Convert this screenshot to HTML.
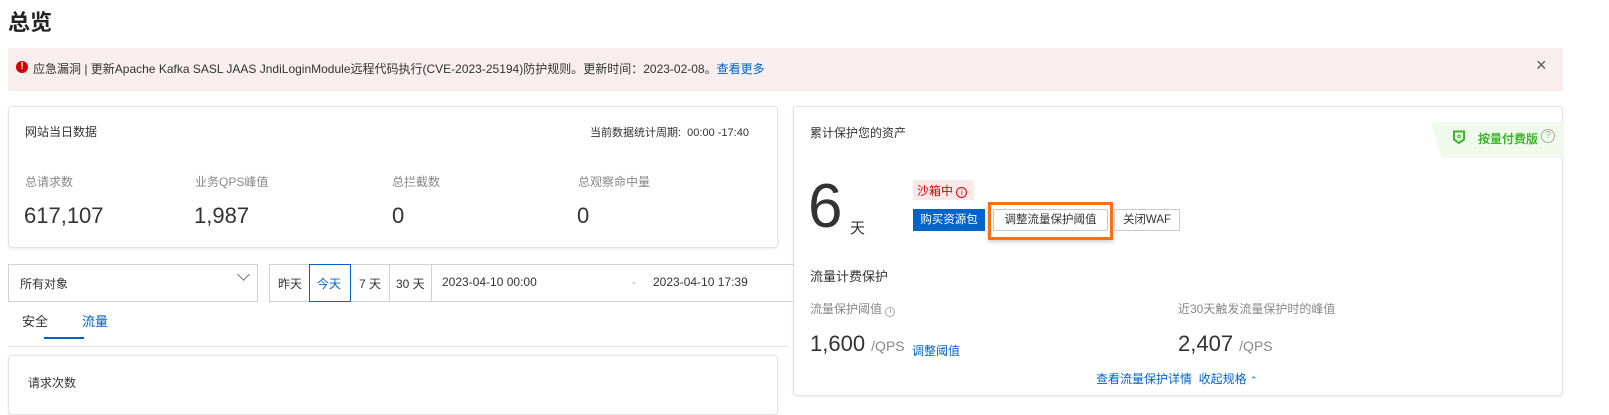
<!DOCTYPE html>
<html><head><meta charset="utf-8"><style>
*{box-sizing:border-box;margin:0;padding:0}
body{width:1609px;height:407px;overflow:hidden;background:#fff;font-family:"Liberation Sans","Noto Sans CJK SC",sans-serif;color:#333;position:relative;font-size:12px}
.a{position:absolute;white-space:nowrap}
.card{position:absolute;background:#fff;border:1px solid #e3e3e3;border-radius:4px;box-shadow:0 1px 3px rgba(0,0,0,.08)}
.lbl{color:#888;font-size:12px}
.big{font-size:22px;color:#333}
.btn{position:absolute;white-space:nowrap;height:22px;border:1px solid #c8c8c8;background:#fff;font-size:11.5px;line-height:20px;text-align:center;color:#333}
.blue{color:#0064c8}
</style></head><body>
<div class="a" style="left:8px;top:5px;font-size:22px;font-weight:bold;color:#222">总览</div>
<div class="a" style="left:8px;top:48px;width:1555px;height:43px;background:#f7eeed"></div>
<div class="a" style="left:16px;top:61px;width:12px;height:12px;border-radius:50%;background:#d50000;color:#fff;font-size:10px;line-height:12px;text-align:center;font-weight:bold">!</div>
<div class="a" style="left:33px;top:60px;font-size:12px;color:#333">应急漏洞 | 更新Apache Kafka SASL JAAS JndiLoginModule远程代码执行(CVE-2023-25194)防护规则。更新时间：2023-02-08。<span class="blue">查看更多</span></div>
<div class="a" style="left:1536px;top:55px;font-size:18px;color:#555">×</div>

<div class="card" style="left:8px;top:106px;width:770px;height:142px"></div>
<div class="a" style="left:25px;top:123px;font-size:12px">网站当日数据</div>
<div class="a" style="left:590px;top:124px;font-size:11px">当前数据统计周期:&nbsp; 00:00 -17:40</div>
<div class="a lbl" style="left:25px;top:173px">总请求数</div>
<div class="a lbl" style="left:195px;top:173px">业务QPS峰值</div>
<div class="a lbl" style="left:392px;top:173px">总拦截数</div>
<div class="a lbl" style="left:578px;top:173px">总观察命中量</div>
<div class="a big" style="left:24px;top:203px">617,107</div>
<div class="a big" style="left:194px;top:203px">1,987</div>
<div class="a big" style="left:392px;top:203px">0</div>
<div class="a big" style="left:577px;top:203px">0</div>

<div class="a" style="left:8px;top:264px;width:250px;height:38px;border:1px solid #d0d0d0"></div>
<div class="a" style="left:20px;top:275px">所有对象</div>
<div class="a" style="left:239px;top:270px;width:9px;height:9px;border-right:1px solid #777;border-bottom:1px solid #777;transform:rotate(45deg)"></div>
<div class="a" style="left:269px;top:264px;width:540px;height:38px;border:1px solid #d0d0d0;border-right:none"></div>
<div class="a" style="left:278px;top:275px">昨天</div>
<div class="a" style="left:309px;top:264px;width:42px;height:38px;border:1px solid #0064c8"></div>
<div class="a blue" style="left:317px;top:275px">今天</div>
<div class="a" style="left:359px;top:275px">7 天</div>
<div class="a" style="left:389px;top:264px;width:1px;height:38px;background:#d0d0d0"></div>
<div class="a" style="left:396px;top:275px">30 天</div>
<div class="a" style="left:431px;top:264px;width:1px;height:38px;background:#d0d0d0"></div>
<div class="a" style="left:442px;top:275px">2023-04-10 00:00</div>
<div class="a" style="left:632px;top:275px;color:#aaa">-</div>
<div class="a" style="left:653px;top:275px">2023-04-10 17:39</div>
<div class="a" style="left:22px;top:311px;font-size:13px">安全</div>
<div class="a blue" style="left:82px;top:311px;font-size:13px">流量</div>
<div class="a" style="left:8px;top:346px;width:780px;height:1px;background:#e3e3e3"></div>
<div class="a" style="left:44px;top:337px;width:40px;height:2px;background:#0064c8"></div>
<div class="card" style="left:8px;top:355px;width:770px;height:60px"></div>
<div class="a" style="left:28px;top:374px">请求次数</div>

<div class="card" style="left:793px;top:106px;width:770px;height:290px"></div>
<div class="a" style="left:810px;top:124px">累计保护您的资产</div>
<div class="a" style="left:1431px;top:122px;width:132px;height:36px;background:#eff9ec;clip-path:polygon(0 0,100% 0,100% 100%,8% 100%)"></div>
<svg class="a" style="left:1452px;top:130px" width="14" height="14" viewBox="0 0 14 14"><path d="M2 1.5h10v8l-5 3.5-5-3.5z" fill="none" stroke="#3ab62a" stroke-width="2"/><circle cx="7" cy="6.5" r="1.3" fill="none" stroke="#3ab62a"/></svg>
<div class="a" style="left:1478px;top:130px;color:#3ab62a;font-weight:bold">按量付费版</div>
<div class="a" style="left:1541px;top:129px;width:14px;height:14px;border:1px solid #aaa;border-radius:50%;font-size:10px;line-height:12px;text-align:center;color:#aaa">?</div>
<div class="a" style="left:808px;top:172px;font-size:62px;line-height:70px;color:#333">6</div>
<div class="a" style="left:850px;top:217px;font-size:15px">天</div>
<div class="a" style="left:913px;top:180px;width:61px;height:20px;background:#fbe9e9"></div>
<div class="a" style="left:917px;top:182px;color:#d50000">沙箱中 <span style="display:inline-block;width:11px;height:11px;border:1px solid #d50000;border-radius:50%;font-size:8px;line-height:9px;text-align:center">i</span></div>
<div class="btn" style="left:913px;top:209px;width:72px;background:#0064c8;border-color:#0064c8;color:#fff">购买资源包</div>
<div class="a" style="left:988px;top:202px;width:125px;height:38px;border:3px solid #f57214;box-shadow:0 2px 4px rgba(0,0,0,.2)"></div>
<div class="btn" style="left:993px;top:209px;width:115px">调整流量保护阈值</div>
<div class="btn" style="left:1114px;top:209px;width:66px">关闭WAF</div>
<div class="a" style="left:810px;top:266px;font-size:13px">流量计费保护</div>
<div class="a lbl" style="left:810px;top:300px">流量保护阈值 <span style="display:inline-block;width:10px;height:10px;border:1px solid #aaa;border-radius:50%;font-size:7px;line-height:8px;text-align:center">i</span></div>
<div class="a lbl" style="left:1178px;top:300px">近30天触发流量保护时的峰值</div>
<div class="a" style="left:810px;top:331px;font-size:22px">1,600 <span style="font-size:14px;color:#888">/QPS</span></div>
<div class="a blue" style="left:912px;top:342px">调整阈值</div>
<div class="a" style="left:1178px;top:331px;font-size:22px">2,407 <span style="font-size:14px;color:#888">/QPS</span></div>
<div class="a blue" style="left:1096px;top:370px">查看流量保护详情&nbsp; 收起规格 <span style="font-size:9px">⌃</span></div>
</body></html>
